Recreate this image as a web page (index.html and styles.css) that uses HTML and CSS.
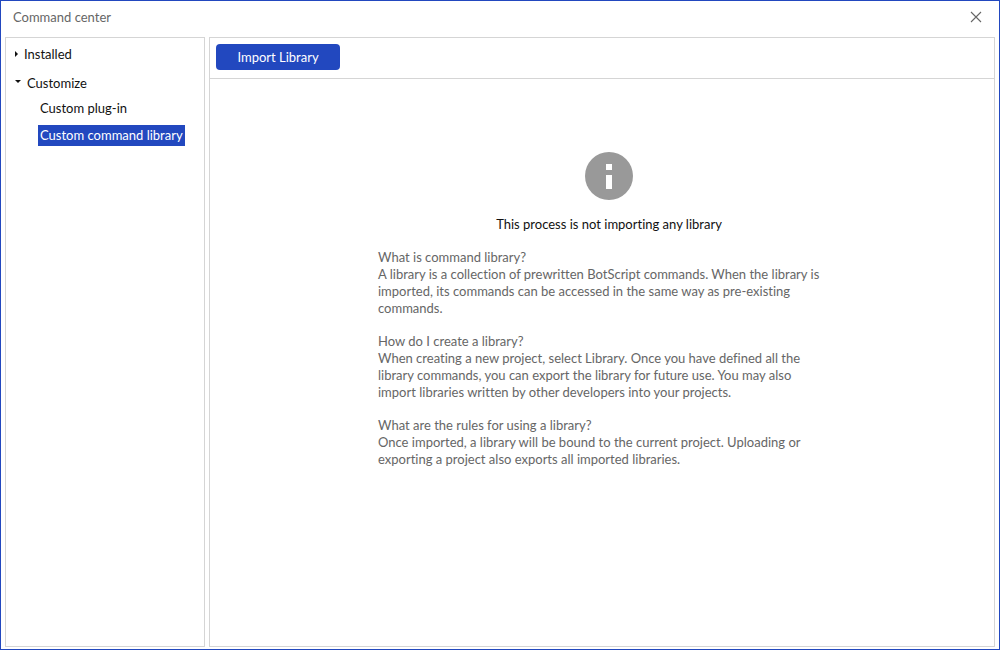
FILE: index.html
```html
<!DOCTYPE html>
<html lang="en">
<head>
<meta charset="utf-8">
<title>Command center</title>
<link rel="stylesheet" href="styles.css">
</head>
<body>
<div class="window">
  <header class="titlebar">
    <h1 class="title">Command center</h1>
    <button class="close" type="button" aria-label="Close">
      <svg width="12" height="12" viewBox="0 0 12 12" aria-hidden="true"><path d="M1 1l10 10M11 1L1 11" fill="none" stroke="#666" stroke-width="1.1"/></svg>
    </button>
  </header>
  <div class="body">
    <nav class="sidebar">
      <button class="group" type="button" aria-expanded="false">
        <svg width="4" height="8" viewBox="0 0 4 8" aria-hidden="true"><path d="M1 0l3 3-3 3z" fill="#111"/></svg>
        <span>Installed</span>
      </button>
      <button class="group group-open" type="button" aria-expanded="true">
        <svg width="7" height="10" viewBox="0 0 7 10" aria-hidden="true"><path d="M1 1h6L4 4z" fill="#111"/></svg>
        <span>Customize</span>
      </button>
      <ul class="items">
        <li><a class="item" href="#plugin">Custom plug-in</a></li>
        <li><a class="item item-selected" href="#library" aria-current="page">Custom command library</a></li>
      </ul>
    </nav>
    <main class="content">
      <div class="toolbar">
        <button class="import" type="button">Import Library</button>
      </div>
      <section class="empty">
        <svg class="info" width="48" height="48" viewBox="0 0 48 48" aria-hidden="true"><circle cx="24" cy="24" r="24" fill="#999"/><path d="M21 12h6v6h-6zM21 23h6v14h-6z" fill="#fff"/></svg>
        <h2 class="message">This process is not importing any library</h2>
        <div class="faq">
          <div class="entry">
            <h3>What is command library?</h3>
            <p>A library is a collection of prewritten BotScript commands. When the library is imported, its commands can be accessed in the same way as pre-existing commands.</p>
          </div>
          <div class="entry">
            <h3>How do I create a library?</h3>
            <p>When creating a new project, select Library. Once you have defined all the library commands, you can export the library for future use. You may also import libraries written by other developers into your projects.</p>
          </div>
          <div class="entry">
            <h3>What are the rules for using a library?</h3>
            <p>Once imported, a library will be bound to the current project. Uploading or exporting a project also exports all imported libraries.</p>
          </div>
        </div>
      </section>
    </main>
  </div>
</div>
</body>
</html>
```
FILE: styles.css
```css
* { box-sizing: border-box; }
body {
  margin: 0;
  background: #fff;
  color: #111;
  font: 13px/17px Lato, "Noto Sans", sans-serif;
  font-variant-ligatures: none;
}
h1, h2, h3, p, ul { margin: 0; padding: 0; font-size: inherit; font-weight: 400; }
ul { list-style: none; }
button { font: inherit; font-variant-ligatures: none; border: 0; background: none; padding: 0; }
.window {
  display: flex;
  flex-direction: column;
  min-height: 100vh;
  border: 1px solid #2248bf;
}
.titlebar {
  display: flex;
  align-items: center;
  justify-content: space-between;
  height: 32px;
  padding: 0 17px 0 12px;
}
.title { color: #666; }
.close { display: flex; }
.body {
  flex: 1;
  display: flex;
  gap: 4px;
  padding: 4px 4px 2px;
}
.sidebar, .content { border: 1px solid #d5d5d5; }
.sidebar { width: 200px; padding: 8px; }
.group {
  display: flex;
  align-items: center;
  gap: 6px;
  color: #111;
}
.group-open { margin-top: 12px; }
.items {
  display: flex;
  flex-direction: column;
  gap: 6px;
  padding: 6px 0 0 24px;
}
.item {
  display: inline-block;
  padding: 2px;
  color: #111;
  text-decoration: none;
  white-space: nowrap;
}
.item-selected { background: #2248bf; color: #fff; }
.content { flex: 1; display: flex; flex-direction: column; }
.toolbar { padding: 6px 6px 8px; border-bottom: 1px solid #d5d5d5; display: flex; }
.import {
  width: 124px;
  height: 26px;
  border-radius: 4px;
  background: #2248bf;
  color: #fff;
}
.empty {
  display: flex;
  flex-direction: column;
  align-items: center;
  padding: 73px 16px 16px 30px;
}
.message { margin: 16px 0; }
.faq {
  display: flex;
  flex-direction: column;
  gap: 16px;
  width: 100%;
  max-width: 462px;
  padding-right: 8px;
  color: #666;
}
```
